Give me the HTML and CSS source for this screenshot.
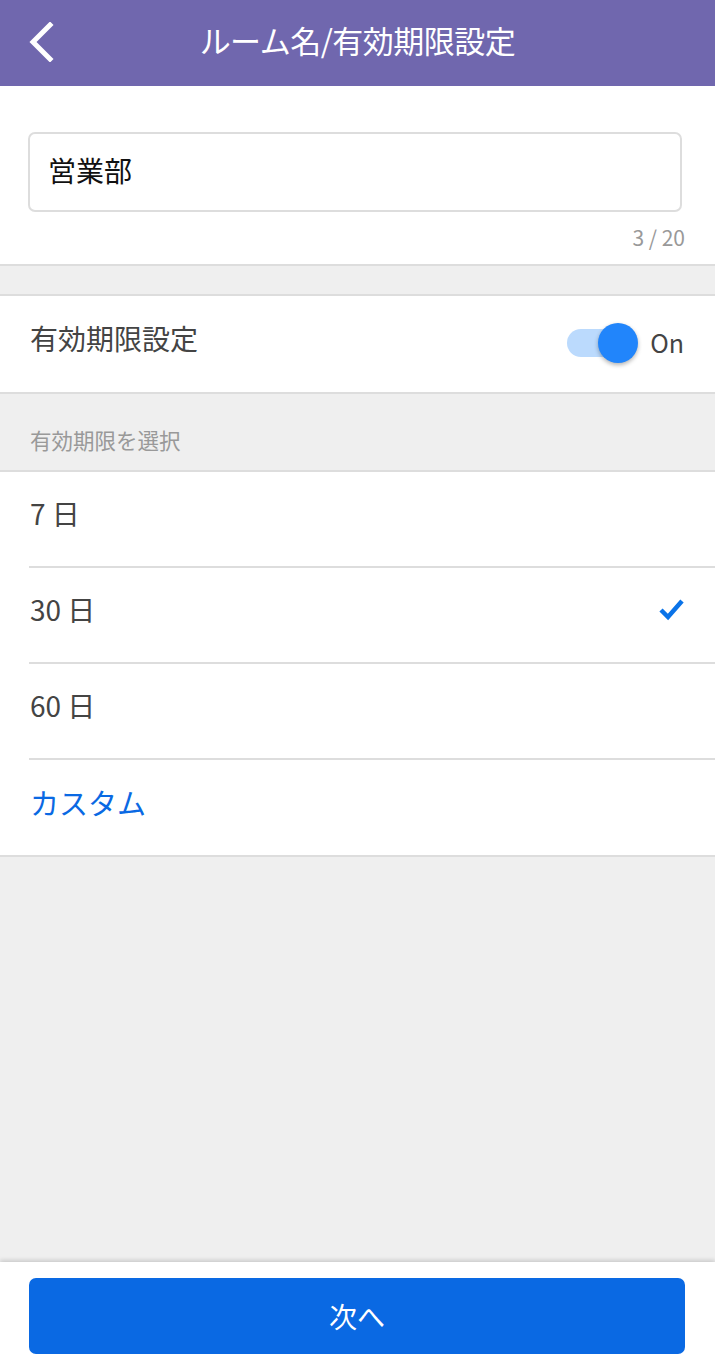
FILE: index.html
```html
<!DOCTYPE html>
<html lang="ja">
<head>
    <meta charset="UTF-8">
    <meta name="viewport" content="width=device-width, initial-scale=1.0">
    <title>ルーム名/有効期限設定</title>
    <link rel="stylesheet" href="styles.css">
</head>
<body>

<div class="app">
    <header class="topbar">
        <button class="back" aria-label="戻る">
            <svg width="26" height="40" viewBox="0 0 26 40">
                <path d="M22 3 L5 20 L22 37" fill="none" stroke="#fff" stroke-width="5" stroke-linecap="square"/>
            </svg>
        </button>
        <h1>ルーム名/有効期限設定</h1>
    </header>

    <section class="name-section">
        <div class="name-input">営業部</div>
        <div class="counter">3 / 20</div>
    </section>

    <div class="spacer"></div>

    <section class="toggle-row">
        <span class="row-label">有効期限設定</span>
        <div class="switch">
            <span class="track"><span class="knob"></span></span>
            <span class="switch-text">On</span>
        </div>
    </section>

    <div class="section-title">有効期限を選択</div>

    <ul class="options">
        <li>7 日</li>
        <li class="selected">30 日
            <svg class="check" width="26" height="24" viewBox="0 0 26 24">
                <path d="M2 12 L9 19 L23 3" fill="none" stroke="#0a73e8" stroke-width="4.5"/>
            </svg>
        </li>
        <li>60 日</li>
        <li class="custom">カスタム</li>
    </ul>

    <div class="fill"></div>

    <footer class="bottom">
        <button class="next">次へ</button>
    </footer>
</div>

</body>
</html>
```

FILE: styles.css
```css
* {
    box-sizing: border-box;
}
body {
    margin: 0;
    font-family: "Noto Sans CJK JP", "Noto Sans", sans-serif;
    background-color: #efefef;
    color: #444;
}
.app {
    display: flex;
    flex-direction: column;
    height: 1369px;
}
.topbar {
    height: 86px;
    background-color: #7067ae;
    display: flex;
    align-items: center;
    justify-content: center;
    position: relative;
}
.topbar h1 {
    margin: -8px 0 0;
    color: #fff;
    font-size: 31px;
    font-weight: 400;
    letter-spacing: -0.5px;
}
.back {
    position: absolute;
    left: 28px;
    top: 22px;
    background: none;
    border: none;
    padding: 0;
    width: 26px;
    height: 40px;
}
.back svg {
    display: block;
}
.name-section {
    background-color: #fff;
    padding: 46px 30px 12px 28px;
    border-bottom: 2px solid #ddd;
}
.name-input {
    height: 80px;
    border: 2px solid #ddd;
    border-radius: 7px;
    padding: 0 18px 4px;
    display: flex;
    align-items: center;
    font-size: 28px;
    color: #111;
    margin-right: 3px;
}
.counter {
    text-align: right;
    font-size: 21px;
    color: #999;
    margin-top: 10px;
    line-height: 30px;
}
.spacer {
    height: 30px;
    border-bottom: 2px solid #ddd;
}
.toggle-row {
    background-color: #fff;
    height: 98px;
    padding: 0 31px 0 30px;
    display: flex;
    align-items: center;
    justify-content: space-between;
    border-bottom: 2px solid #ddd;
}
.row-label {
    font-size: 28px;
    color: #444;
    margin-top: -12px;
}
.switch {
    display: flex;
    align-items: center;
    gap: 12px;
    margin-top: -2px;
}
.track {
    width: 52px;
    height: 28px;
    border-radius: 14px;
    background-color: #bbdafd;
    position: relative;
    display: block;
}
.knob {
    position: absolute;
    width: 40px;
    height: 40px;
    border-radius: 50%;
    background-color: #2185fb;
    right: -19px;
    top: -6px;
    box-shadow: 0 2px 4px rgba(0, 0, 0, 0.3);
}
.switch-text {
    font-size: 25px;
    color: #444;
    margin-left: 19px;
    margin-top: -2px;
}
.section-title {
    height: 78px;
    padding: 30px 30px 0;
    font-size: 21.5px;
    color: #999;
    border-bottom: 2px solid #ddd;
}
.options {
    list-style: none;
    margin: 0;
    padding: 0 0 0 29px;
    background-color: #fff;
    border-bottom: 2px solid #ddd;
}
.options li {
    height: 96px;
    display: flex;
    align-items: center;
    justify-content: space-between;
    padding: 0 30px 12px 1px;
    font-size: 28px;
    color: #444;
    border-bottom: 2px solid #ddd;
}
.options li:last-child {
    border-bottom: none;
    height: 95px;
}
.options li.custom {
    color: #0a69e3;
    font-size: 29px;
}
.check {
    margin-top: 2px;
}
.fill {
    flex: 1;
}
.bottom {
    background-color: #fff;
    padding: 16px 30px 15px 29px;
    box-shadow: 0 -2px 4px rgba(0, 0, 0, 0.15);
}
.next {
    width: 100%;
    height: 76px;
    border: none;
    border-radius: 7px;
    background-color: #0a69e3;
    color: #fff;
    font-family: "Noto Sans CJK JP", "Noto Sans", sans-serif;
    font-size: 28px;
}
```
